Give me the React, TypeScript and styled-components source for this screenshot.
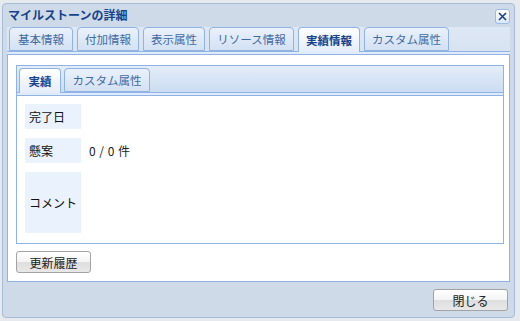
import styled, { createGlobalStyle } from "styled-components";

const GlobalStyle = createGlobalStyle`
    html, body {
        margin: 0;
        padding: 0;
        background: #e6e9ee;
    }
    body {
        font-family: "Noto Sans CJK JP", "Noto Sans", sans-serif;
        font-size: 12px;
        color: #222;
    }
`;

const Page = styled.div`
    width: 520px;
    height: 321px;
    padding: 3px 5px 3px 2px;
    box-sizing: border-box;
`;

const Window = styled.div`
    width: 100%;
    height: 100%;
    box-sizing: border-box;
    background: #cedae7;
    border: 1px solid #a4bcd8;
    border-radius: 4px;
    display: flex;
    flex-direction: column;
    padding: 0 4px 6px 4px;
`;

const Header = styled.div`
    height: 23px;
    display: flex;
    align-items: center;
    justify-content: space-between;
    padding: 0 0 0 1px;
`;

const Title = styled.div`
    font-size: 12px;
    font-weight: bold;
    color: #15428b;
    line-height: 1;
`;

const CloseButton = styled.button`
    width: 15px;
    height: 15px;
    margin-top: 2px;
    padding: 0;
    border: 1px solid #99bbe8;
    border-radius: 3px;
    background: linear-gradient(#ffffff, #dce8f8);
    display: flex;
    align-items: center;
    justify-content: center;
    cursor: pointer;
`;

const TabStrip = styled.div<{ $inner?: boolean }>`
    display: flex;
    align-items: flex-end;
    gap: ${p => (p.$inner ? "3px" : "4px")};
    height: ${p => (p.$inner ? "26px" : "25px")};
    padding: 0 0 0 2px;
    background: ${p =>
        p.$inner
            ? "linear-gradient(#e4edf9, #cbdcf1)"
            : "linear-gradient(#dfe8f5, #d7e3f2)"};
    border: ${p => (p.$inner ? "1px solid #8eb3e4" : "none")};
    border-bottom: 1px solid #8eb3e4;
`;

const TabGap = styled.div<{ $inner?: boolean }>`
    height: 2px;
    background: #dfeafb;
    border-left: ${p => (p.$inner ? "1px solid #8eb3e4" : "none")};
    border-right: ${p => (p.$inner ? "1px solid #8eb3e4" : "none")};
    border-bottom: 1px solid #8eb3e4;
`;

const Tab = styled.div<{ $active?: boolean; $w: number }>`
    width: ${p => p.$w}px;
    height: ${p => (p.$active ? "25px" : "24px")};
    box-sizing: border-box;
    margin-bottom: ${p => (p.$active ? "-1px" : "0")};
    border: 1px solid #8eb3e4;
    border-bottom: ${p => (p.$active ? "none" : "1px solid #8eb3e4")};
    border-radius: 4px 4px 0 0;
    background: ${p =>
        p.$active
            ? "linear-gradient(#ffffff, #e3edfb)"
            : "linear-gradient(#eaf1fb, #d3e1f3)"};
    color: ${p => (p.$active ? "#15428b" : "#416aa3")};
    font-weight: ${p => (p.$active ? "bold" : "normal")};
    font-size: 11.5px;
    display: flex;
    align-items: center;
    justify-content: center;
    position: relative;
    z-index: 1;
`;

const Body = styled.div`
    flex: 1;
    background: #fff;
    border: 1px solid #8eb3e4;
    border-top: none;
    padding: 10px 5px 8px 8px;
    display: flex;
    flex-direction: column;
`;

const InnerPanel = styled.div`
    height: 179px;
    display: flex;
    flex-direction: column;
`;

const InnerBody = styled.div`
    flex: 1;
    border: 1px solid #8eb3e4;
    border-top: none;
    padding: 8px 8px 9px 8px;
    display: flex;
    flex-direction: column;
    gap: 9px;
`;

const Row = styled.div<{ $h: number }>`
    display: flex;
    height: ${p => p.$h}px;
    align-items: stretch;
`;

const Label = styled.div`
    width: 56px;
    background: #eaf2fe;
    display: flex;
    align-items: center;
    padding-left: 4px;
    box-sizing: border-box;
    font-size: 12px;
    color: #111;
    white-space: nowrap;
`;

const Value = styled.div`
    display: flex;
    align-items: center;
    padding-left: 8px;
    font-size: 12px;
    color: #222;
    word-spacing: 1px;
`;

const Button = styled.button`
    width: 75px;
    height: 22px;
    box-sizing: border-box;
    border: 1px solid #a3a3a3;
    border-radius: 3px;
    background: linear-gradient(#ffffff 0%, #f4f4f4 50%, #dedede 51%, #e8e8e8 100%);
    font-family: "Noto Sans CJK JP", "Noto Sans", sans-serif;
    font-size: 12px;
    color: #222;
    padding: 0;
    cursor: pointer;
`;

const BodyFooter = styled.div`
    margin-top: auto;
    padding-top: 7px;
`;

const Footer = styled.div`
    display: flex;
    justify-content: flex-end;
    padding: 7px 2px 0 0;
`;

const outerTabs = [
    { label: "基本情報", w: 64 },
    { label: "付加情報", w: 62 },
    { label: "表示属性", w: 62 },
    { label: "リソース情報", w: 85 },
    { label: "実績情報", w: 62, active: true },
    { label: "カスタム属性", w: 85 },
];

const innerTabs = [
    { label: "実績", w: 42, active: true },
    { label: "カスタム属性", w: 86 },
];

export default function App() {
    return (
        <Page>
            <GlobalStyle />
            <Window>
                <Header>
                    <Title>マイルストーンの詳細</Title>
                    <CloseButton aria-label="close">
                        <svg width="9" height="9" viewBox="0 0 9 9">
                            <path d="M1 1 L8 8 M8 1 L1 8" stroke="#15428b" strokeWidth="1.6" />
                        </svg>
                    </CloseButton>
                </Header>

                <TabStrip>
                    {outerTabs.map(t => (
                        <Tab key={t.label} $w={t.w} $active={t.active}>
                            {t.label}
                        </Tab>
                    ))}
                </TabStrip>
                <TabGap />

                <Body>
                    <InnerPanel>
                        <TabStrip $inner>
                            {innerTabs.map(t => (
                                <Tab key={t.label} $w={t.w} $active={t.active}>
                                    {t.label}
                                </Tab>
                            ))}
                        </TabStrip>
                        <TabGap $inner />
                        <InnerBody>
                            <Row $h={25}>
                                <Label>完了日</Label>
                            </Row>
                            <Row $h={25}>
                                <Label>懸案</Label>
                                <Value>0 / 0 件</Value>
                            </Row>
                            <Row $h={61}>
                                <Label>コメント</Label>
                            </Row>
                        </InnerBody>
                    </InnerPanel>
                    <BodyFooter>
                        <Button>更新履歴</Button>
                    </BodyFooter>
                </Body>

                <Footer>
                    <Button>閉じる</Button>
                </Footer>
            </Window>
        </Page>
    );
}
